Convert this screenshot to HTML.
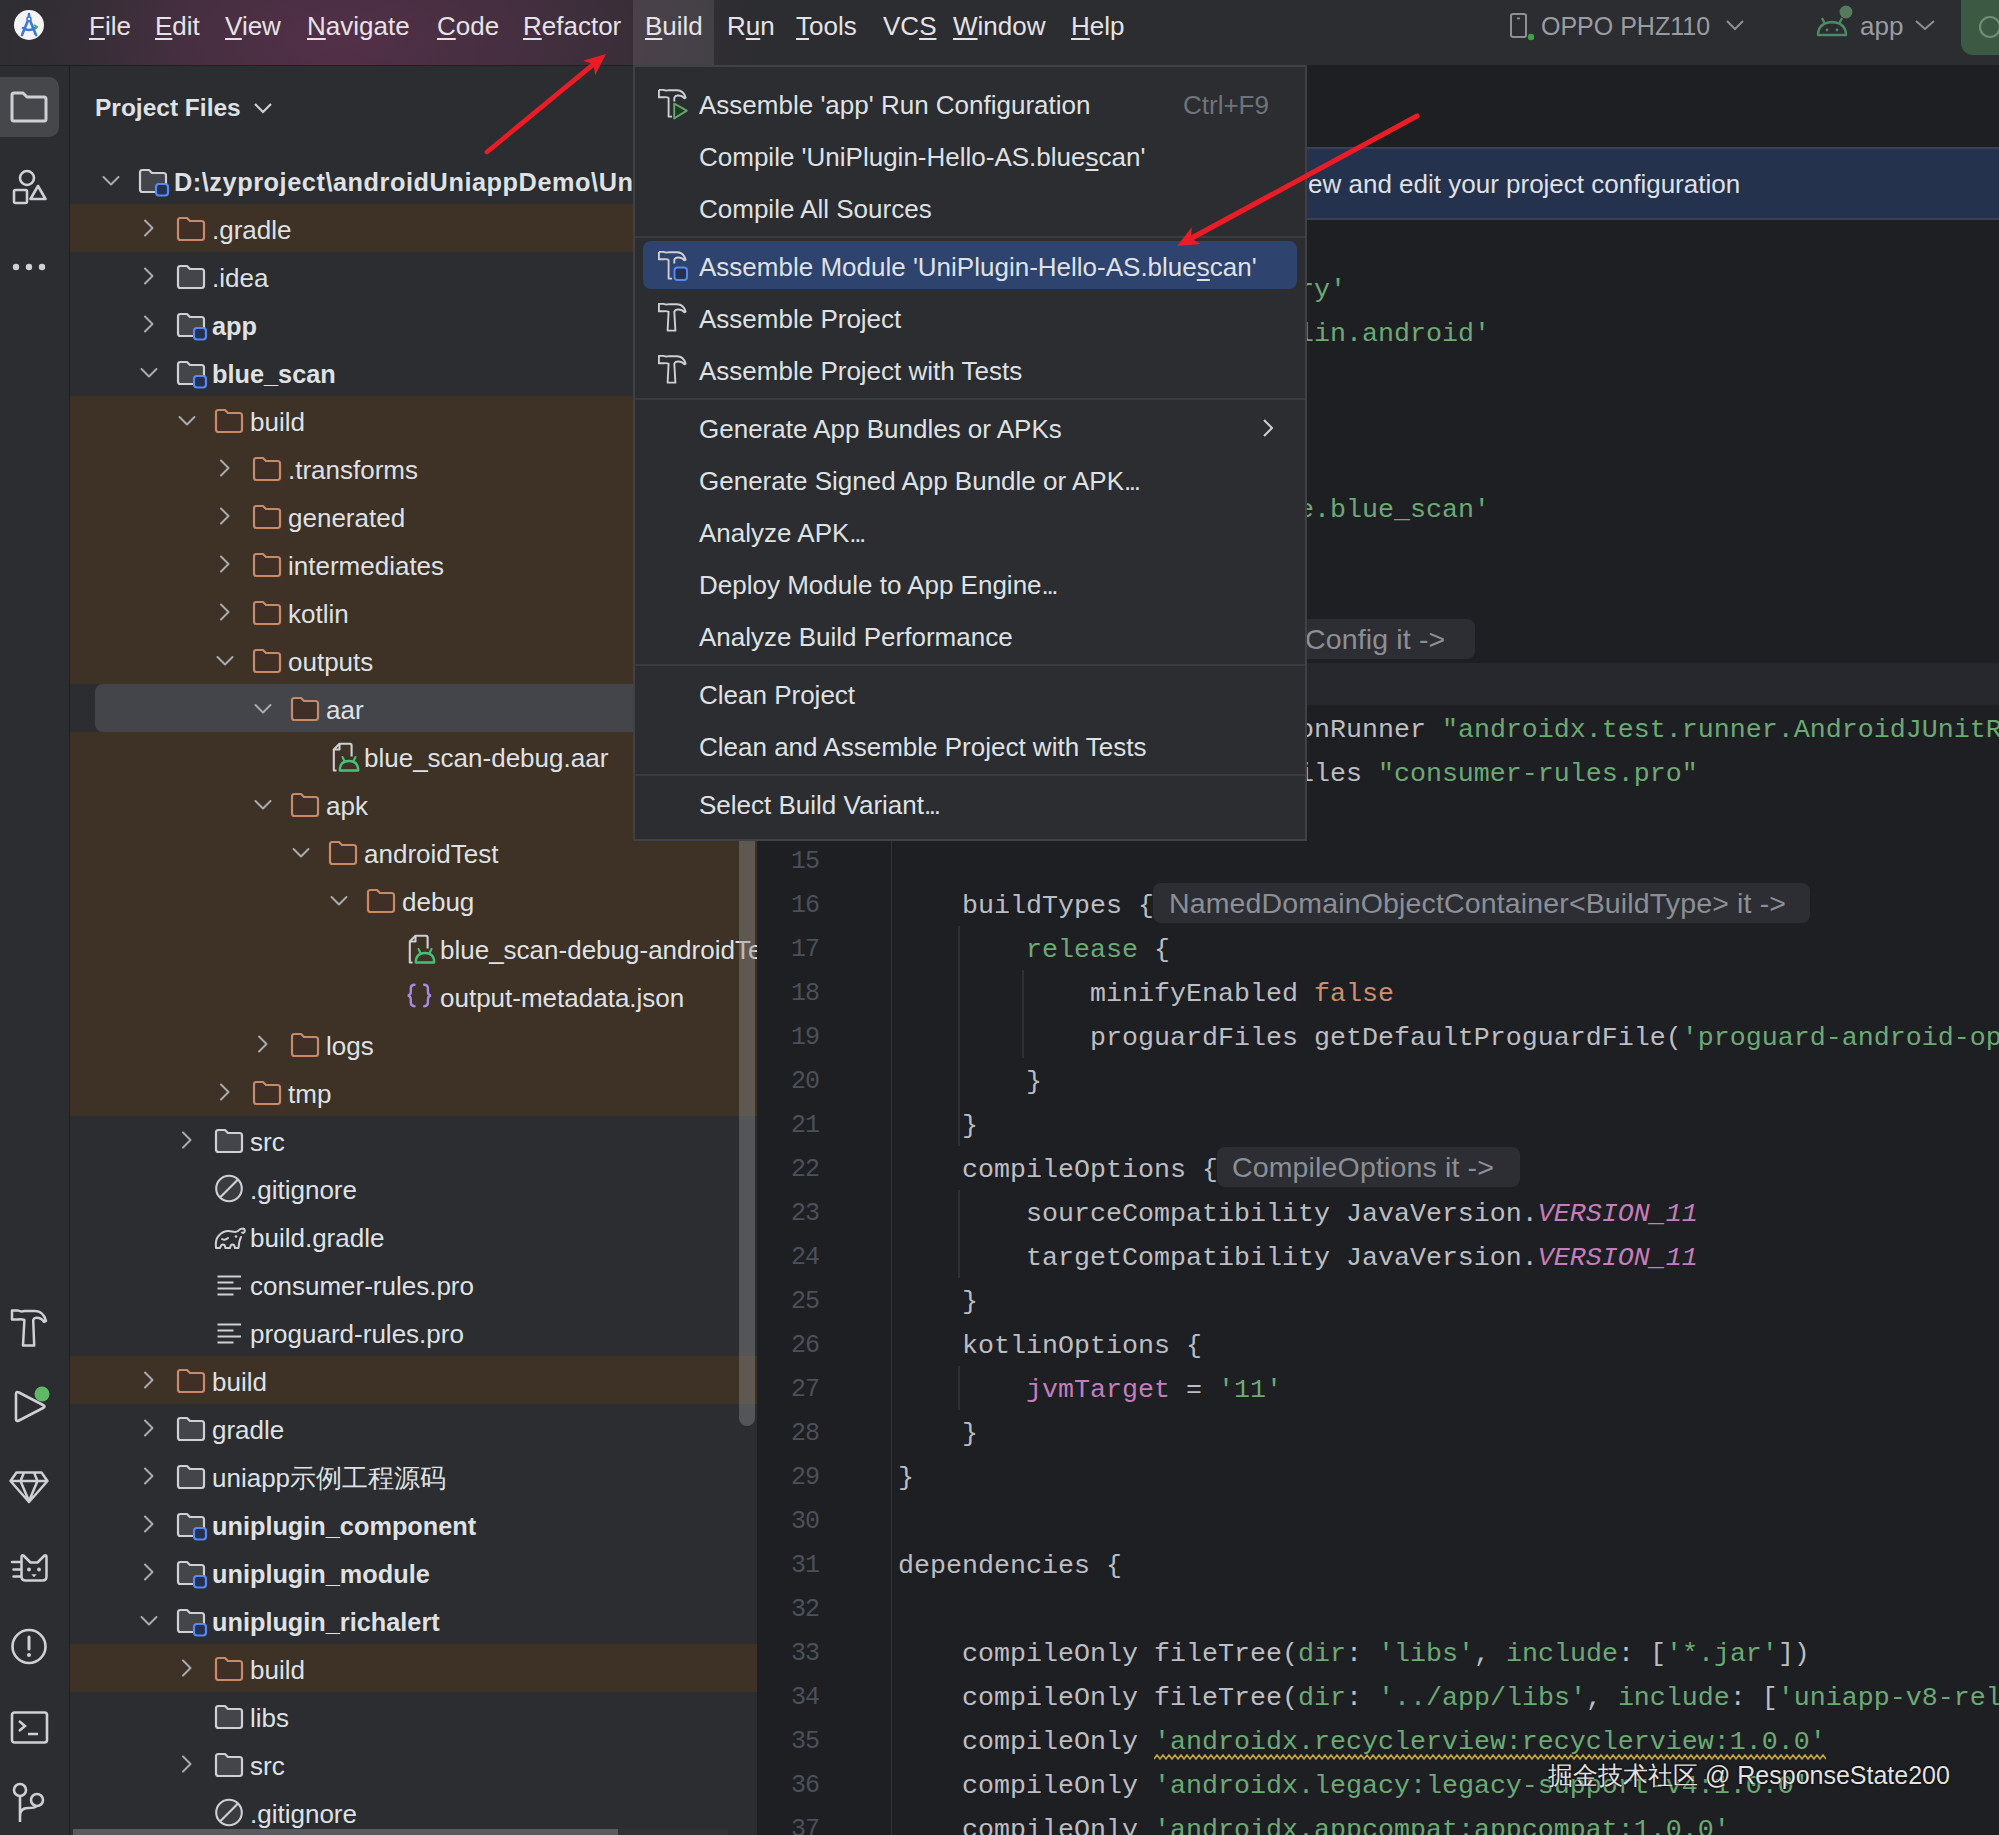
<!DOCTYPE html><html><head><meta charset="utf-8"><style>
*{box-sizing:border-box}
html,body{margin:0;padding:0;width:1999px;height:1835px;overflow:hidden;background:#1e1f22;font-family:"Liberation Sans",sans-serif;}
.a{position:absolute}
.t{position:absolute;white-space:pre;font-size:26px;line-height:30px;color:#dfe1e5}
.b{font-weight:bold;font-size:25.3px}
.u{text-decoration:underline;text-underline-offset:3px;text-decoration-thickness:2px}
.c{position:absolute;white-space:pre;font-family:"Liberation Mono",monospace;font-size:26.667px;line-height:44px;color:#bcbec4}
.g{color:#6aab73}.o{color:#cf8e6d}.p{color:#c77dbb;font-style:italic}.n{color:#4b5059}
.inl{position:absolute;background:#2c2e33;border-radius:8px;color:#8c8f96;font-size:28.5px;letter-spacing:0.15px;line-height:40px;white-space:pre;font-family:"Liberation Sans",sans-serif}

</style></head><body>
<div class="a" style="left:0;top:0;width:1999px;height:66px;background:#2b2d30"></div>
<div class="a" style="left:0;top:0;width:1999px;height:66px;background:radial-gradient(ellipse 440px 200px at 340px 40px, rgba(112,50,90,0.58), rgba(112,50,90,0.32) 50%, rgba(112,50,90,0.07) 85%, rgba(112,50,90,0) 100%)"></div>
<div class="a" style="left:0;top:0;width:200px;height:66px;background:linear-gradient(to right, rgba(43,45,48,0.55) 0px, rgba(43,45,48,0.45) 70px, rgba(43,45,48,0) 190px)"></div>
<div class="a" style="left:0;top:65px;width:1999px;height:1px;background:#1e1f22"></div>
<div class="a" style="left:633px;top:0;width:81px;height:66px;background:rgba(255,255,255,0.095)"></div>
<svg class="a" style="left:13px;top:9px" width="32" height="32" viewBox="0 0 32 32"><circle cx="16" cy="16" r="15" fill="#f4f4f6"/><path d="M16 5 V9 M16 9 L9 26 M16 9 L23 26 M10 19 Q16 23 22 19" fill="none" stroke="#3c78d8" stroke-width="2.6" stroke-linecap="round"/><circle cx="16" cy="10" r="2" fill="#f4f4f6" stroke="#3c78d8" stroke-width="1.5"/><path d="M21 16 l3 2 l-2 2" fill="none" stroke="#4caf50" stroke-width="2"/></svg>
<div class="t" style="left:89px;top:11px;color:#e6e2e6"><span class="u">F</span>ile</div>
<div class="t" style="left:155px;top:11px;color:#e6e2e6"><span class="u">E</span>dit</div>
<div class="t" style="left:225px;top:11px;color:#e6e2e6"><span class="u">V</span>iew</div>
<div class="t" style="left:307px;top:11px;color:#e6e2e6"><span class="u">N</span>avigate</div>
<div class="t" style="left:437px;top:11px;color:#e6e2e6"><span class="u">C</span>ode</div>
<div class="t" style="left:523px;top:11px;color:#e6e2e6"><span class="u">R</span>efactor</div>
<div class="t" style="left:645px;top:11px;color:#e6e2e6"><span class="u">B</span>uild</div>
<div class="t" style="left:727px;top:11px;color:#e6e2e6">R<span class="u">u</span>n</div>
<div class="t" style="left:796px;top:11px;color:#e6e2e6"><span class="u">T</span>ools</div>
<div class="t" style="left:883px;top:11px;color:#e6e2e6">VC<span class="u">S</span></div>
<div class="t" style="left:953px;top:11px;color:#e6e2e6"><span class="u">W</span>indow</div>
<div class="t" style="left:1071px;top:11px;color:#e6e2e6"><span class="u">H</span>elp</div>
<svg class="a" style="left:1508px;top:12px" width="30" height="30" viewBox="0 0 30 30"><rect x="3" y="2" width="15" height="23" rx="2" fill="none" stroke="#8e9096" stroke-width="2"/><rect x="9" y="5.5" width="3" height="1.8" fill="#8e9096"/><circle cx="23" cy="25" r="3.2" fill="#3fa345"/></svg>
<div class="t" style="left:1541px;top:11px;color:#9a9ca2;font-size:25px">OPPO PHZ110</div>
<svg class="a" style="left:1725px;top:18px" width="20" height="14" viewBox="0 0 20 14"><path d="M2 3 L10 11 L18 3" fill="none" stroke="#8e9096" stroke-width="2"/></svg>
<svg class="a" style="left:1815px;top:4px" width="42" height="36" viewBox="0 0 42 36"><path d="M3 31 Q3 19 17 18 Q31 19 31 31 Z" fill="none" stroke="#4f8a66" stroke-width="2.4" stroke-linejoin="round"/><path d="M7 14 L10 20 M27 14 L24 20" stroke="#4f8a66" stroke-width="2.4"/><circle cx="12" cy="26" r="1.4" fill="#4f8a66"/><circle cx="22" cy="26" r="1.4" fill="#4f8a66"/><circle cx="31" cy="8" r="6.5" fill="#557a5c"/></svg>
<div class="t" style="left:1860px;top:11px;color:#9a9ca2">app</div>
<svg class="a" style="left:1914px;top:18px" width="22" height="14" viewBox="0 0 22 14"><path d="M2 3 L11 11 L20 3" fill="none" stroke="#8e9096" stroke-width="2"/></svg>
<div class="a" style="left:1961px;top:0;width:60px;height:55px;border-radius:0 0 0 12px;background:#3c5a43"></div>
<svg class="a" style="left:1975px;top:12px" width="30" height="30" viewBox="0 0 30 30"><circle cx="15" cy="15" r="10" fill="none" stroke="#6f8f74" stroke-width="2.2"/></svg>
<div class="a" style="left:0;top:66px;width:69px;height:1769px;background:#2b2d30"></div>
<div class="a" style="left:69px;top:66px;width:1px;height:1769px;background:#1e1f22"></div>
<div class="a" style="left:0;top:77px;width:59px;height:60px;border-radius:0 10px 10px 0;background:#45474b"></div>
<svg class="a" style="left:9px;top:90px" width="40" height="34" viewBox="0 0 40 34"><path d="M3 5 Q3 3 5 3 H14 L18 7 H35 Q37 7 37 9 V29 Q37 31 35 31 H5 Q3 31 3 29 Z" fill="none" stroke="#ced0d6" stroke-width="3" stroke-linejoin="round"/></svg>
<svg class="a" style="left:10px;top:166px" width="40" height="40" viewBox="0 0 40 40"><circle cx="17" cy="12" r="7" fill="none" stroke="#ced0d6" stroke-width="2.6"/><rect x="4" y="24" width="13" height="13" rx="1.5" fill="none" stroke="#ced0d6" stroke-width="2.6"/><path d="M28 20 L35.5 33 H20.5 Z" fill="none" stroke="#ced0d6" stroke-width="2.6" stroke-linejoin="round"/></svg>
<svg class="a" style="left:10px;top:260px" width="40" height="14" viewBox="0 0 40 14"><circle cx="6" cy="7" r="3.2" fill="#ced0d6"/><circle cx="19" cy="7" r="3.2" fill="#ced0d6"/><circle cx="32" cy="7" r="3.2" fill="#ced0d6"/></svg>
<svg class="a" style="left:0px;top:1291px" width="60" height="60" viewBox="0 0 60 60"><path d="M12 19.5 H18 Q21 21 24.5 20 H35 Q43.5 20 46 30 L44 31 Q41.5 26.5 36 26.8 Q33.8 27 33.2 29 L34.2 54.5 H23 L24.4 29 Q21.5 27.8 18 28.5 H12 Z" fill="none" stroke="#ced0d6" stroke-width="2.5" stroke-linejoin="round"/></svg>
<svg class="a" style="left:10px;top:1384px" width="44" height="42" viewBox="0 0 44 42"><path d="M6 10 Q6 7 9 8.5 L33 21 Q36 22.5 33 24 L9 36.5 Q6 38 6 35 Z" fill="none" stroke="#ced0d6" stroke-width="2.6" stroke-linejoin="round"/><circle cx="32" cy="10" r="7.5" fill="#5fb865"/></svg>
<svg class="a" style="left:0px;top:1450px" width="60" height="60" viewBox="0 0 60 60"><path d="M16.5 22.5 H41.5 L47.5 31 L29 52 L10.5 31 Z M10.5 31 H47.5 M24 22.5 L20.5 31 L29 51 L37.5 31 L34 22.5" fill="none" stroke="#ced0d6" stroke-width="2.5" stroke-linejoin="round"/></svg>
<svg class="a" style="left:0px;top:1540px" width="60" height="60" viewBox="0 0 60 60"><path d="M21.5 17 Q21.5 14.5 23.5 15.5 L30.5 22.5 H37.5 L44.5 15.5 Q46.5 14.5 46.5 17 V36.5 Q46.5 40.5 42.5 40.5 H25.5 Q21.5 40.5 21.5 36.5 Z" fill="none" stroke="#ced0d6" stroke-width="2.5" stroke-linejoin="round"/><path d="M12 22 H21 M13.5 29.5 H21 M13.5 36.5 H21" stroke="#ced0d6" stroke-width="2.5" stroke-linecap="round"/><circle cx="29" cy="29.5" r="1.9" fill="#ced0d6"/><circle cx="39" cy="29.5" r="1.9" fill="#ced0d6"/><path d="M31.3 34.3 H36.7 L34 37.3 Z" fill="#ced0d6"/></svg>
<svg class="a" style="left:9px;top:1627px" width="40" height="40" viewBox="0 0 40 40"><circle cx="20" cy="19.5" r="16.5" fill="none" stroke="#ced0d6" stroke-width="2.6"/><path d="M20 10 V22" stroke="#ced0d6" stroke-width="3" stroke-linecap="round"/><circle cx="20" cy="28" r="2" fill="#ced0d6"/></svg>
<svg class="a" style="left:9px;top:1709px" width="42" height="38" viewBox="0 0 42 38"><rect x="3" y="3.5" width="35" height="30" rx="2.5" fill="none" stroke="#ced0d6" stroke-width="2.6"/><path d="M10 12 L16 17 L10 22" fill="none" stroke="#ced0d6" stroke-width="2.5"/><path d="M19 25 H29" stroke="#ced0d6" stroke-width="2.5"/></svg>
<svg class="a" style="left:0px;top:1770px" width="60" height="60" viewBox="0 0 60 60"><circle cx="20" cy="20" r="6" fill="none" stroke="#ced0d6" stroke-width="2.6"/><circle cx="37" cy="30" r="6" fill="none" stroke="#ced0d6" stroke-width="2.6"/><path d="M20 26 V52 M20 46 Q20 38 28 38 Q36 38 36.5 36" fill="none" stroke="#ced0d6" stroke-width="2.6"/></svg>
<div class="a" style="left:70px;top:66px;width:687px;height:1769px;background:#2b2d30"></div>
<div class="t b" style="left:95px;top:93px;font-size:24.5px">Project Files</div>
<svg class="a" style="left:253px;top:101px" width="20" height="14" viewBox="0 0 20 14"><path d="M2 3 L10 11 L18 3" fill="none" stroke="#ced0d6" stroke-width="2.2"/></svg>
<div class="a" style="left:70px;top:66px;width:687px;height:1769px;overflow:hidden">
<svg style="position:absolute;left:31px;top:109px" width="20" height="14" viewBox="0 0 20 14"><path d="M2.5 2 L10 9.5 L17.5 2" fill="none" stroke="#a8abb0" stroke-width="2" stroke-linecap="round" stroke-linejoin="round"/></svg>
<svg style="position:absolute;left:67px;top:101px" width="34" height="30" viewBox="-2 -2 34 30"><path d="M1 3.5 Q1 1 3.5 1 H10 L13 4 H24.5 Q27 4 27 6.5 V20.5 Q27 23 24.5 23 H3.5 Q1 23 1 20.5 Z" fill="#43454a" stroke="#ced0d6" stroke-width="2.2" stroke-linejoin="round"/><rect x="17" y="15" width="12" height="11.5" rx="3" fill="#25324d" stroke="#548af7" stroke-width="2.2"/></svg>
<div class="t b" style="left:104px;top:101px;letter-spacing:0.55px">D:\zyproject\androidUniappDemo\UniPlugin-Hello-AS</div>
<div class="a" style="left:0;top:138px;width:687px;height:48px;background:#3d3225"></div>
<svg style="position:absolute;left:72px;top:153px" width="14" height="20" viewBox="0 0 14 20"><path d="M3 1.5 L10.5 9 L3 16.5" fill="none" stroke="#a8abb0" stroke-width="2" stroke-linecap="round" stroke-linejoin="round"/></svg>
<svg style="position:absolute;left:105px;top:149px" width="34" height="30" viewBox="-2 -2 34 30"><path d="M1 3.5 Q1 1 3.5 1 H10 L13 4 H24.5 Q27 4 27 6.5 V20.5 Q27 23 24.5 23 H3.5 Q1 23 1 20.5 Z" fill="#3f2f26" stroke="#c98a67" stroke-width="2.2" stroke-linejoin="round"/></svg>
<div class="t" style="left:142px;top:149px">.gradle</div>
<svg style="position:absolute;left:72px;top:201px" width="14" height="20" viewBox="0 0 14 20"><path d="M3 1.5 L10.5 9 L3 16.5" fill="none" stroke="#a8abb0" stroke-width="2" stroke-linecap="round" stroke-linejoin="round"/></svg>
<svg style="position:absolute;left:105px;top:197px" width="34" height="30" viewBox="-2 -2 34 30"><path d="M1 3.5 Q1 1 3.5 1 H10 L13 4 H24.5 Q27 4 27 6.5 V20.5 Q27 23 24.5 23 H3.5 Q1 23 1 20.5 Z" fill="#43454a" stroke="#ced0d6" stroke-width="2.2" stroke-linejoin="round"/></svg>
<div class="t" style="left:142px;top:197px">.idea</div>
<svg style="position:absolute;left:72px;top:249px" width="14" height="20" viewBox="0 0 14 20"><path d="M3 1.5 L10.5 9 L3 16.5" fill="none" stroke="#a8abb0" stroke-width="2" stroke-linecap="round" stroke-linejoin="round"/></svg>
<svg style="position:absolute;left:105px;top:245px" width="34" height="30" viewBox="-2 -2 34 30"><path d="M1 3.5 Q1 1 3.5 1 H10 L13 4 H24.5 Q27 4 27 6.5 V20.5 Q27 23 24.5 23 H3.5 Q1 23 1 20.5 Z" fill="#43454a" stroke="#ced0d6" stroke-width="2.2" stroke-linejoin="round"/><rect x="17" y="15" width="12" height="11.5" rx="3" fill="#25324d" stroke="#548af7" stroke-width="2.2"/></svg>
<div class="t b" style="left:142px;top:245px">app</div>
<svg style="position:absolute;left:69px;top:301px" width="20" height="14" viewBox="0 0 20 14"><path d="M2.5 2 L10 9.5 L17.5 2" fill="none" stroke="#a8abb0" stroke-width="2" stroke-linecap="round" stroke-linejoin="round"/></svg>
<svg style="position:absolute;left:105px;top:293px" width="34" height="30" viewBox="-2 -2 34 30"><path d="M1 3.5 Q1 1 3.5 1 H10 L13 4 H24.5 Q27 4 27 6.5 V20.5 Q27 23 24.5 23 H3.5 Q1 23 1 20.5 Z" fill="#43454a" stroke="#ced0d6" stroke-width="2.2" stroke-linejoin="round"/><rect x="17" y="15" width="12" height="11.5" rx="3" fill="#25324d" stroke="#548af7" stroke-width="2.2"/></svg>
<div class="t b" style="left:142px;top:293px">blue_scan</div>
<div class="a" style="left:0;top:330px;width:687px;height:48px;background:#3d3225"></div>
<svg style="position:absolute;left:107px;top:349px" width="20" height="14" viewBox="0 0 20 14"><path d="M2.5 2 L10 9.5 L17.5 2" fill="none" stroke="#a8abb0" stroke-width="2" stroke-linecap="round" stroke-linejoin="round"/></svg>
<svg style="position:absolute;left:143px;top:341px" width="34" height="30" viewBox="-2 -2 34 30"><path d="M1 3.5 Q1 1 3.5 1 H10 L13 4 H24.5 Q27 4 27 6.5 V20.5 Q27 23 24.5 23 H3.5 Q1 23 1 20.5 Z" fill="#3f2f26" stroke="#c98a67" stroke-width="2.2" stroke-linejoin="round"/></svg>
<div class="t" style="left:180px;top:341px">build</div>
<div class="a" style="left:0;top:378px;width:687px;height:48px;background:#3d3225"></div>
<svg style="position:absolute;left:148px;top:393px" width="14" height="20" viewBox="0 0 14 20"><path d="M3 1.5 L10.5 9 L3 16.5" fill="none" stroke="#a8abb0" stroke-width="2" stroke-linecap="round" stroke-linejoin="round"/></svg>
<svg style="position:absolute;left:181px;top:389px" width="34" height="30" viewBox="-2 -2 34 30"><path d="M1 3.5 Q1 1 3.5 1 H10 L13 4 H24.5 Q27 4 27 6.5 V20.5 Q27 23 24.5 23 H3.5 Q1 23 1 20.5 Z" fill="#3f2f26" stroke="#c98a67" stroke-width="2.2" stroke-linejoin="round"/></svg>
<div class="t" style="left:218px;top:389px">.transforms</div>
<div class="a" style="left:0;top:426px;width:687px;height:48px;background:#3d3225"></div>
<svg style="position:absolute;left:148px;top:441px" width="14" height="20" viewBox="0 0 14 20"><path d="M3 1.5 L10.5 9 L3 16.5" fill="none" stroke="#a8abb0" stroke-width="2" stroke-linecap="round" stroke-linejoin="round"/></svg>
<svg style="position:absolute;left:181px;top:437px" width="34" height="30" viewBox="-2 -2 34 30"><path d="M1 3.5 Q1 1 3.5 1 H10 L13 4 H24.5 Q27 4 27 6.5 V20.5 Q27 23 24.5 23 H3.5 Q1 23 1 20.5 Z" fill="#3f2f26" stroke="#c98a67" stroke-width="2.2" stroke-linejoin="round"/></svg>
<div class="t" style="left:218px;top:437px">generated</div>
<div class="a" style="left:0;top:474px;width:687px;height:48px;background:#3d3225"></div>
<svg style="position:absolute;left:148px;top:489px" width="14" height="20" viewBox="0 0 14 20"><path d="M3 1.5 L10.5 9 L3 16.5" fill="none" stroke="#a8abb0" stroke-width="2" stroke-linecap="round" stroke-linejoin="round"/></svg>
<svg style="position:absolute;left:181px;top:485px" width="34" height="30" viewBox="-2 -2 34 30"><path d="M1 3.5 Q1 1 3.5 1 H10 L13 4 H24.5 Q27 4 27 6.5 V20.5 Q27 23 24.5 23 H3.5 Q1 23 1 20.5 Z" fill="#3f2f26" stroke="#c98a67" stroke-width="2.2" stroke-linejoin="round"/></svg>
<div class="t" style="left:218px;top:485px">intermediates</div>
<div class="a" style="left:0;top:522px;width:687px;height:48px;background:#3d3225"></div>
<svg style="position:absolute;left:148px;top:537px" width="14" height="20" viewBox="0 0 14 20"><path d="M3 1.5 L10.5 9 L3 16.5" fill="none" stroke="#a8abb0" stroke-width="2" stroke-linecap="round" stroke-linejoin="round"/></svg>
<svg style="position:absolute;left:181px;top:533px" width="34" height="30" viewBox="-2 -2 34 30"><path d="M1 3.5 Q1 1 3.5 1 H10 L13 4 H24.5 Q27 4 27 6.5 V20.5 Q27 23 24.5 23 H3.5 Q1 23 1 20.5 Z" fill="#3f2f26" stroke="#c98a67" stroke-width="2.2" stroke-linejoin="round"/></svg>
<div class="t" style="left:218px;top:533px">kotlin</div>
<div class="a" style="left:0;top:570px;width:687px;height:48px;background:#3d3225"></div>
<svg style="position:absolute;left:145px;top:589px" width="20" height="14" viewBox="0 0 20 14"><path d="M2.5 2 L10 9.5 L17.5 2" fill="none" stroke="#a8abb0" stroke-width="2" stroke-linecap="round" stroke-linejoin="round"/></svg>
<svg style="position:absolute;left:181px;top:581px" width="34" height="30" viewBox="-2 -2 34 30"><path d="M1 3.5 Q1 1 3.5 1 H10 L13 4 H24.5 Q27 4 27 6.5 V20.5 Q27 23 24.5 23 H3.5 Q1 23 1 20.5 Z" fill="#3f2f26" stroke="#c98a67" stroke-width="2.2" stroke-linejoin="round"/></svg>
<div class="t" style="left:218px;top:581px">outputs</div>
<div class="a" style="left:25px;top:618px;width:680px;height:48px;border-radius:8px;background:#43454a"></div>
<svg style="position:absolute;left:183px;top:637px" width="20" height="14" viewBox="0 0 20 14"><path d="M2.5 2 L10 9.5 L17.5 2" fill="none" stroke="#a8abb0" stroke-width="2" stroke-linecap="round" stroke-linejoin="round"/></svg>
<svg style="position:absolute;left:219px;top:629px" width="34" height="30" viewBox="-2 -2 34 30"><path d="M1 3.5 Q1 1 3.5 1 H10 L13 4 H24.5 Q27 4 27 6.5 V20.5 Q27 23 24.5 23 H3.5 Q1 23 1 20.5 Z" fill="#3f2f26" stroke="#c98a67" stroke-width="2.2" stroke-linejoin="round"/></svg>
<div class="t" style="left:256px;top:629px">aar</div>
<div class="a" style="left:0;top:666px;width:687px;height:48px;background:#3d3225"></div>
<svg class="a" style="left:259px;top:674px" width="32" height="34" viewBox="0 0 32 34"><path d="M7.5 30.5 H4.8 V9.5 L10.5 3.8 H21 Q22.6 3.8 22.6 5.4 V16.5" fill="none" stroke="#ced0d6" stroke-width="2.1" stroke-linejoin="round"/><path d="M10.5 3.8 V9.5 H4.8" fill="none" stroke="#ced0d6" stroke-width="2.1" stroke-linejoin="round"/><path d="M10.8 30.5 Q10.8 21 20 21 Q29.2 21 29.2 30.5 Z" fill="none" stroke="#45c27a" stroke-width="2.3" stroke-linejoin="round"/><path d="M13.5 17 L15.6 21.3 M26.5 17 L24.4 21.3" stroke="#45c27a" stroke-width="2.1" stroke-linecap="round"/></svg>
<div class="t" style="left:294px;top:677px">blue_scan-debug.aar</div>
<div class="a" style="left:0;top:714px;width:687px;height:48px;background:#3d3225"></div>
<svg style="position:absolute;left:183px;top:733px" width="20" height="14" viewBox="0 0 20 14"><path d="M2.5 2 L10 9.5 L17.5 2" fill="none" stroke="#a8abb0" stroke-width="2" stroke-linecap="round" stroke-linejoin="round"/></svg>
<svg style="position:absolute;left:219px;top:725px" width="34" height="30" viewBox="-2 -2 34 30"><path d="M1 3.5 Q1 1 3.5 1 H10 L13 4 H24.5 Q27 4 27 6.5 V20.5 Q27 23 24.5 23 H3.5 Q1 23 1 20.5 Z" fill="#3f2f26" stroke="#c98a67" stroke-width="2.2" stroke-linejoin="round"/></svg>
<div class="t" style="left:256px;top:725px">apk</div>
<div class="a" style="left:0;top:762px;width:687px;height:48px;background:#3d3225"></div>
<svg style="position:absolute;left:221px;top:781px" width="20" height="14" viewBox="0 0 20 14"><path d="M2.5 2 L10 9.5 L17.5 2" fill="none" stroke="#a8abb0" stroke-width="2" stroke-linecap="round" stroke-linejoin="round"/></svg>
<svg style="position:absolute;left:257px;top:773px" width="34" height="30" viewBox="-2 -2 34 30"><path d="M1 3.5 Q1 1 3.5 1 H10 L13 4 H24.5 Q27 4 27 6.5 V20.5 Q27 23 24.5 23 H3.5 Q1 23 1 20.5 Z" fill="#3f2f26" stroke="#c98a67" stroke-width="2.2" stroke-linejoin="round"/></svg>
<div class="t" style="left:294px;top:773px">androidTest</div>
<div class="a" style="left:0;top:810px;width:687px;height:48px;background:#3d3225"></div>
<svg style="position:absolute;left:259px;top:829px" width="20" height="14" viewBox="0 0 20 14"><path d="M2.5 2 L10 9.5 L17.5 2" fill="none" stroke="#a8abb0" stroke-width="2" stroke-linecap="round" stroke-linejoin="round"/></svg>
<svg style="position:absolute;left:295px;top:821px" width="34" height="30" viewBox="-2 -2 34 30"><path d="M1 3.5 Q1 1 3.5 1 H10 L13 4 H24.5 Q27 4 27 6.5 V20.5 Q27 23 24.5 23 H3.5 Q1 23 1 20.5 Z" fill="#3f2f26" stroke="#c98a67" stroke-width="2.2" stroke-linejoin="round"/></svg>
<div class="t" style="left:332px;top:821px">debug</div>
<div class="a" style="left:0;top:858px;width:687px;height:48px;background:#3d3225"></div>
<svg class="a" style="left:335px;top:866px" width="32" height="34" viewBox="0 0 32 34"><path d="M7.5 30.5 H4.8 V9.5 L10.5 3.8 H21 Q22.6 3.8 22.6 5.4 V16.5" fill="none" stroke="#ced0d6" stroke-width="2.1" stroke-linejoin="round"/><path d="M10.5 3.8 V9.5 H4.8" fill="none" stroke="#ced0d6" stroke-width="2.1" stroke-linejoin="round"/><path d="M10.8 30.5 Q10.8 21 20 21 Q29.2 21 29.2 30.5 Z" fill="none" stroke="#45c27a" stroke-width="2.3" stroke-linejoin="round"/><path d="M13.5 17 L15.6 21.3 M26.5 17 L24.4 21.3" stroke="#45c27a" stroke-width="2.1" stroke-linecap="round"/></svg>
<div class="t" style="left:370px;top:869px">blue_scan-debug-androidTest.apk</div>
<div class="a" style="left:0;top:906px;width:687px;height:48px;background:#3d3225"></div>
<svg class="a" style="left:335px;top:915px" width="30" height="30" viewBox="0 0 30 30"><path d="M9.5 3.8 Q5.8 3.8 5.8 7.5 V11 Q5.8 14 2.8 14.6 Q5.8 15.2 5.8 18.2 V21.6 Q5.8 25.2 9.5 25.2 M19.2 3.8 Q22.9 3.8 22.9 7.5 V11 Q22.9 14 25.9 14.6 Q22.9 15.2 22.9 18.2 V21.6 Q22.9 25.2 19.2 25.2" fill="none" stroke="#a98ae0" stroke-width="2.4" stroke-linecap="round"/></svg>
<div class="t" style="left:370px;top:917px">output-metadata.json</div>
<div class="a" style="left:0;top:954px;width:687px;height:48px;background:#3d3225"></div>
<svg style="position:absolute;left:186px;top:969px" width="14" height="20" viewBox="0 0 14 20"><path d="M3 1.5 L10.5 9 L3 16.5" fill="none" stroke="#a8abb0" stroke-width="2" stroke-linecap="round" stroke-linejoin="round"/></svg>
<svg style="position:absolute;left:219px;top:965px" width="34" height="30" viewBox="-2 -2 34 30"><path d="M1 3.5 Q1 1 3.5 1 H10 L13 4 H24.5 Q27 4 27 6.5 V20.5 Q27 23 24.5 23 H3.5 Q1 23 1 20.5 Z" fill="#3f2f26" stroke="#c98a67" stroke-width="2.2" stroke-linejoin="round"/></svg>
<div class="t" style="left:256px;top:965px">logs</div>
<div class="a" style="left:0;top:1002px;width:687px;height:48px;background:#3d3225"></div>
<svg style="position:absolute;left:148px;top:1017px" width="14" height="20" viewBox="0 0 14 20"><path d="M3 1.5 L10.5 9 L3 16.5" fill="none" stroke="#a8abb0" stroke-width="2" stroke-linecap="round" stroke-linejoin="round"/></svg>
<svg style="position:absolute;left:181px;top:1013px" width="34" height="30" viewBox="-2 -2 34 30"><path d="M1 3.5 Q1 1 3.5 1 H10 L13 4 H24.5 Q27 4 27 6.5 V20.5 Q27 23 24.5 23 H3.5 Q1 23 1 20.5 Z" fill="#3f2f26" stroke="#c98a67" stroke-width="2.2" stroke-linejoin="round"/></svg>
<div class="t" style="left:218px;top:1013px">tmp</div>
<svg style="position:absolute;left:110px;top:1065px" width="14" height="20" viewBox="0 0 14 20"><path d="M3 1.5 L10.5 9 L3 16.5" fill="none" stroke="#a8abb0" stroke-width="2" stroke-linecap="round" stroke-linejoin="round"/></svg>
<svg style="position:absolute;left:143px;top:1061px" width="34" height="30" viewBox="-2 -2 34 30"><path d="M1 3.5 Q1 1 3.5 1 H10 L13 4 H24.5 Q27 4 27 6.5 V20.5 Q27 23 24.5 23 H3.5 Q1 23 1 20.5 Z" fill="#43454a" stroke="#ced0d6" stroke-width="2.2" stroke-linejoin="round"/></svg>
<div class="t" style="left:180px;top:1061px">src</div>
<svg class="a" style="left:145px;top:1107px" width="30" height="30" viewBox="0 0 30 30"><circle cx="14" cy="15.5" r="12.8" fill="#3a3c40" stroke="#ced0d6" stroke-width="2.1"/><path d="M5 24.5 L23 6.5" stroke="#ced0d6" stroke-width="2.1"/></svg>
<div class="t" style="left:180px;top:1109px">.gitignore</div>
<svg class="a" style="left:143px;top:1155px" width="34" height="30" viewBox="0 0 34 30"><path d="M3 27 Q2 19 5.5 15 Q11 8.5 19 10.5 Q23 11.5 25 10 Q27 7.5 30 7.5 Q32.5 8 31.5 11 Q30.5 12.5 29 11.5 M3 27 H7 Q8 23.5 10 23.5 Q12 23.5 12.5 27 H17 Q17.5 23.5 19.5 23.5 Q21.5 23.5 22 27 H25.5 Q26 20 28 16 M9 18 Q12 20 15 17" fill="none" stroke="#ced0d6" stroke-width="2" stroke-linejoin="round" stroke-linecap="round"/><circle cx="23" cy="15.5" r="1.3" fill="#ced0d6"/></svg>
<div class="t" style="left:180px;top:1157px">build.gradle</div>
<svg class="a" style="left:145px;top:1203px" width="30" height="30" viewBox="0 0 30 30"><path d="M2.5 7.5 H26 M2.5 13.5 H18.5 M2.5 19.5 H26 M2.5 25.5 H18.5" stroke="#ced0d6" stroke-width="2.1"/></svg>
<div class="t" style="left:180px;top:1205px">consumer-rules.pro</div>
<svg class="a" style="left:145px;top:1251px" width="30" height="30" viewBox="0 0 30 30"><path d="M2.5 7.5 H26 M2.5 13.5 H18.5 M2.5 19.5 H26 M2.5 25.5 H18.5" stroke="#ced0d6" stroke-width="2.1"/></svg>
<div class="t" style="left:180px;top:1253px">proguard-rules.pro</div>
<div class="a" style="left:0;top:1290px;width:687px;height:48px;background:#3d3225"></div>
<svg style="position:absolute;left:72px;top:1305px" width="14" height="20" viewBox="0 0 14 20"><path d="M3 1.5 L10.5 9 L3 16.5" fill="none" stroke="#a8abb0" stroke-width="2" stroke-linecap="round" stroke-linejoin="round"/></svg>
<svg style="position:absolute;left:105px;top:1301px" width="34" height="30" viewBox="-2 -2 34 30"><path d="M1 3.5 Q1 1 3.5 1 H10 L13 4 H24.5 Q27 4 27 6.5 V20.5 Q27 23 24.5 23 H3.5 Q1 23 1 20.5 Z" fill="#3f2f26" stroke="#c98a67" stroke-width="2.2" stroke-linejoin="round"/></svg>
<div class="t" style="left:142px;top:1301px">build</div>
<svg style="position:absolute;left:72px;top:1353px" width="14" height="20" viewBox="0 0 14 20"><path d="M3 1.5 L10.5 9 L3 16.5" fill="none" stroke="#a8abb0" stroke-width="2" stroke-linecap="round" stroke-linejoin="round"/></svg>
<svg style="position:absolute;left:105px;top:1349px" width="34" height="30" viewBox="-2 -2 34 30"><path d="M1 3.5 Q1 1 3.5 1 H10 L13 4 H24.5 Q27 4 27 6.5 V20.5 Q27 23 24.5 23 H3.5 Q1 23 1 20.5 Z" fill="#43454a" stroke="#ced0d6" stroke-width="2.2" stroke-linejoin="round"/></svg>
<div class="t" style="left:142px;top:1349px">gradle</div>
<svg style="position:absolute;left:72px;top:1401px" width="14" height="20" viewBox="0 0 14 20"><path d="M3 1.5 L10.5 9 L3 16.5" fill="none" stroke="#a8abb0" stroke-width="2" stroke-linecap="round" stroke-linejoin="round"/></svg>
<svg style="position:absolute;left:105px;top:1397px" width="34" height="30" viewBox="-2 -2 34 30"><path d="M1 3.5 Q1 1 3.5 1 H10 L13 4 H24.5 Q27 4 27 6.5 V20.5 Q27 23 24.5 23 H3.5 Q1 23 1 20.5 Z" fill="#43454a" stroke="#ced0d6" stroke-width="2.2" stroke-linejoin="round"/></svg>
<div class="t" style="left:142px;top:1397px">uniapp示例工程源码</div>
<svg style="position:absolute;left:72px;top:1449px" width="14" height="20" viewBox="0 0 14 20"><path d="M3 1.5 L10.5 9 L3 16.5" fill="none" stroke="#a8abb0" stroke-width="2" stroke-linecap="round" stroke-linejoin="round"/></svg>
<svg style="position:absolute;left:105px;top:1445px" width="34" height="30" viewBox="-2 -2 34 30"><path d="M1 3.5 Q1 1 3.5 1 H10 L13 4 H24.5 Q27 4 27 6.5 V20.5 Q27 23 24.5 23 H3.5 Q1 23 1 20.5 Z" fill="#43454a" stroke="#ced0d6" stroke-width="2.2" stroke-linejoin="round"/><rect x="17" y="15" width="12" height="11.5" rx="3" fill="#25324d" stroke="#548af7" stroke-width="2.2"/></svg>
<div class="t b" style="left:142px;top:1445px">uniplugin_component</div>
<svg style="position:absolute;left:72px;top:1497px" width="14" height="20" viewBox="0 0 14 20"><path d="M3 1.5 L10.5 9 L3 16.5" fill="none" stroke="#a8abb0" stroke-width="2" stroke-linecap="round" stroke-linejoin="round"/></svg>
<svg style="position:absolute;left:105px;top:1493px" width="34" height="30" viewBox="-2 -2 34 30"><path d="M1 3.5 Q1 1 3.5 1 H10 L13 4 H24.5 Q27 4 27 6.5 V20.5 Q27 23 24.5 23 H3.5 Q1 23 1 20.5 Z" fill="#43454a" stroke="#ced0d6" stroke-width="2.2" stroke-linejoin="round"/><rect x="17" y="15" width="12" height="11.5" rx="3" fill="#25324d" stroke="#548af7" stroke-width="2.2"/></svg>
<div class="t b" style="left:142px;top:1493px">uniplugin_module</div>
<svg style="position:absolute;left:69px;top:1549px" width="20" height="14" viewBox="0 0 20 14"><path d="M2.5 2 L10 9.5 L17.5 2" fill="none" stroke="#a8abb0" stroke-width="2" stroke-linecap="round" stroke-linejoin="round"/></svg>
<svg style="position:absolute;left:105px;top:1541px" width="34" height="30" viewBox="-2 -2 34 30"><path d="M1 3.5 Q1 1 3.5 1 H10 L13 4 H24.5 Q27 4 27 6.5 V20.5 Q27 23 24.5 23 H3.5 Q1 23 1 20.5 Z" fill="#43454a" stroke="#ced0d6" stroke-width="2.2" stroke-linejoin="round"/><rect x="17" y="15" width="12" height="11.5" rx="3" fill="#25324d" stroke="#548af7" stroke-width="2.2"/></svg>
<div class="t b" style="left:142px;top:1541px">uniplugin_richalert</div>
<div class="a" style="left:0;top:1578px;width:687px;height:48px;background:#3d3225"></div>
<svg style="position:absolute;left:110px;top:1593px" width="14" height="20" viewBox="0 0 14 20"><path d="M3 1.5 L10.5 9 L3 16.5" fill="none" stroke="#a8abb0" stroke-width="2" stroke-linecap="round" stroke-linejoin="round"/></svg>
<svg style="position:absolute;left:143px;top:1589px" width="34" height="30" viewBox="-2 -2 34 30"><path d="M1 3.5 Q1 1 3.5 1 H10 L13 4 H24.5 Q27 4 27 6.5 V20.5 Q27 23 24.5 23 H3.5 Q1 23 1 20.5 Z" fill="#3f2f26" stroke="#c98a67" stroke-width="2.2" stroke-linejoin="round"/></svg>
<div class="t" style="left:180px;top:1589px">build</div>
<svg style="position:absolute;left:143px;top:1637px" width="34" height="30" viewBox="-2 -2 34 30"><path d="M1 3.5 Q1 1 3.5 1 H10 L13 4 H24.5 Q27 4 27 6.5 V20.5 Q27 23 24.5 23 H3.5 Q1 23 1 20.5 Z" fill="#43454a" stroke="#ced0d6" stroke-width="2.2" stroke-linejoin="round"/></svg>
<div class="t" style="left:180px;top:1637px">libs</div>
<svg style="position:absolute;left:110px;top:1689px" width="14" height="20" viewBox="0 0 14 20"><path d="M3 1.5 L10.5 9 L3 16.5" fill="none" stroke="#a8abb0" stroke-width="2" stroke-linecap="round" stroke-linejoin="round"/></svg>
<svg style="position:absolute;left:143px;top:1685px" width="34" height="30" viewBox="-2 -2 34 30"><path d="M1 3.5 Q1 1 3.5 1 H10 L13 4 H24.5 Q27 4 27 6.5 V20.5 Q27 23 24.5 23 H3.5 Q1 23 1 20.5 Z" fill="#43454a" stroke="#ced0d6" stroke-width="2.2" stroke-linejoin="round"/></svg>
<div class="t" style="left:180px;top:1685px">src</div>
<svg class="a" style="left:145px;top:1731px" width="30" height="30" viewBox="0 0 30 30"><circle cx="14" cy="15.5" r="12.8" fill="#3a3c40" stroke="#ced0d6" stroke-width="2.1"/><path d="M5 24.5 L23 6.5" stroke="#ced0d6" stroke-width="2.1"/></svg>
<div class="t" style="left:180px;top:1733px">.gitignore</div>
</div>
<div class="a" style="left:739px;top:800px;width:16px;height:626px;border-radius:8px;background:rgba(140,140,140,0.42)"></div>
<div class="a" style="left:73px;top:1829px;width:655px;height:6px;background:#303236"></div>
<div class="a" style="left:73px;top:1829px;width:545px;height:6px;background:#595b5f"></div>
<div class="a" style="left:757px;top:66px;width:1242px;height:1769px;background:#1e1f22"></div>
<div class="a" style="left:891px;top:66px;width:1px;height:1769px;background:#313438"></div>
<div class="a" style="left:757px;top:663px;width:1242px;height:42px;background:#26282e"></div>
<div class="a" style="left:757px;top:147px;width:1242px;height:73px;background:#25324d;border-top:2px solid #384257;border-bottom:2px solid #384257"></div>
<div class="t" style="left:1308px;top:168.5px;">ew and edit your project configuration</div>
<div class="c n" style="left:757px;top:224px;width:62px;text-align:right;font-size:25px;letter-spacing:-1px">1</div>
<div class="c" style="left:898px;top:224px">plugins {</div>
<div class="c n" style="left:757px;top:268px;width:62px;text-align:right;font-size:25px;letter-spacing:-1px">2</div>
<div class="c" style="left:898px;top:268px">    id <span class="g">&#x27;com.android.library&#x27;</span></div>
<div class="c n" style="left:757px;top:312px;width:62px;text-align:right;font-size:25px;letter-spacing:-1px">3</div>
<div class="c" style="left:898px;top:312px">    id <span class="g">&#x27;org.jetbrains.kotlin.android&#x27;</span></div>
<div class="c n" style="left:757px;top:356px;width:62px;text-align:right;font-size:25px;letter-spacing:-1px">4</div>
<div class="c" style="left:898px;top:356px">}</div>
<div class="c n" style="left:757px;top:400px;width:62px;text-align:right;font-size:25px;letter-spacing:-1px">5</div>
<div class="c" style="left:898px;top:400px"></div>
<div class="c n" style="left:757px;top:444px;width:62px;text-align:right;font-size:25px;letter-spacing:-1px">6</div>
<div class="c" style="left:898px;top:444px">android {</div>
<div class="c n" style="left:757px;top:488px;width:62px;text-align:right;font-size:25px;letter-spacing:-1px">7</div>
<div class="c" style="left:898px;top:488px">    namespace <span class="g">&#x27;com.example.blue_scan&#x27;</span></div>
<div class="c n" style="left:757px;top:532px;width:62px;text-align:right;font-size:25px;letter-spacing:-1px">8</div>
<div class="c" style="left:898px;top:532px">    compileSdk 33</div>
<div class="c n" style="left:757px;top:576px;width:62px;text-align:right;font-size:25px;letter-spacing:-1px">9</div>
<div class="c" style="left:898px;top:576px"></div>
<div class="c n" style="left:757px;top:620px;width:62px;text-align:right;font-size:25px;letter-spacing:-1px">10</div>
<div class="c" style="left:898px;top:620px">    defaultConfig { </div>
<div class="c n" style="left:757px;top:664px;width:62px;text-align:right;font-size:25px;letter-spacing:-1px">11</div>
<div class="c" style="left:898px;top:664px">        minSdk 24</div>
<div class="c n" style="left:757px;top:708px;width:62px;text-align:right;font-size:25px;letter-spacing:-1px">12</div>
<div class="c" style="left:898px;top:708px">        testInstrumentationRunner <span class="g">&quot;androidx.test.runner.AndroidJUnitRunner&quot;</span></div>
<div class="c n" style="left:757px;top:752px;width:62px;text-align:right;font-size:25px;letter-spacing:-1px">13</div>
<div class="c" style="left:898px;top:752px">        consumerProguardFiles <span class="g">&quot;consumer-rules.pro&quot;</span></div>
<div class="c n" style="left:757px;top:796px;width:62px;text-align:right;font-size:25px;letter-spacing:-1px">14</div>
<div class="c" style="left:898px;top:796px">    }</div>
<div class="c n" style="left:757px;top:840px;width:62px;text-align:right;font-size:25px;letter-spacing:-1px">15</div>
<div class="c" style="left:898px;top:840px"></div>
<div class="c n" style="left:757px;top:884px;width:62px;text-align:right;font-size:25px;letter-spacing:-1px">16</div>
<div class="c" style="left:898px;top:884px">    buildTypes {</div>
<div class="c n" style="left:757px;top:928px;width:62px;text-align:right;font-size:25px;letter-spacing:-1px">17</div>
<div class="c" style="left:898px;top:928px">        <span class="g">release</span> {</div>
<div class="c n" style="left:757px;top:972px;width:62px;text-align:right;font-size:25px;letter-spacing:-1px">18</div>
<div class="c" style="left:898px;top:972px">            minifyEnabled <span class="o">false</span></div>
<div class="c n" style="left:757px;top:1016px;width:62px;text-align:right;font-size:25px;letter-spacing:-1px">19</div>
<div class="c" style="left:898px;top:1016px">            proguardFiles getDefaultProguardFile(<span class="g">&#x27;proguard-android-optimize.txt&#x27;</span>, <span class="g">&#x27;proguard-rules.pro&#x27;</span></div>
<div class="c n" style="left:757px;top:1060px;width:62px;text-align:right;font-size:25px;letter-spacing:-1px">20</div>
<div class="c" style="left:898px;top:1060px">        }</div>
<div class="c n" style="left:757px;top:1104px;width:62px;text-align:right;font-size:25px;letter-spacing:-1px">21</div>
<div class="c" style="left:898px;top:1104px">    }</div>
<div class="c n" style="left:757px;top:1148px;width:62px;text-align:right;font-size:25px;letter-spacing:-1px">22</div>
<div class="c" style="left:898px;top:1148px">    compileOptions {</div>
<div class="c n" style="left:757px;top:1192px;width:62px;text-align:right;font-size:25px;letter-spacing:-1px">23</div>
<div class="c" style="left:898px;top:1192px">        sourceCompatibility JavaVersion.<span class="p">VERSION_11</span></div>
<div class="c n" style="left:757px;top:1236px;width:62px;text-align:right;font-size:25px;letter-spacing:-1px">24</div>
<div class="c" style="left:898px;top:1236px">        targetCompatibility JavaVersion.<span class="p">VERSION_11</span></div>
<div class="c n" style="left:757px;top:1280px;width:62px;text-align:right;font-size:25px;letter-spacing:-1px">25</div>
<div class="c" style="left:898px;top:1280px">    }</div>
<div class="c n" style="left:757px;top:1324px;width:62px;text-align:right;font-size:25px;letter-spacing:-1px">26</div>
<div class="c" style="left:898px;top:1324px">    kotlinOptions {</div>
<div class="c n" style="left:757px;top:1368px;width:62px;text-align:right;font-size:25px;letter-spacing:-1px">27</div>
<div class="c" style="left:898px;top:1368px">        <span style="color:#c77dbb">jvmTarget</span> = <span class="g">&#x27;11&#x27;</span></div>
<div class="c n" style="left:757px;top:1412px;width:62px;text-align:right;font-size:25px;letter-spacing:-1px">28</div>
<div class="c" style="left:898px;top:1412px">    }</div>
<div class="c n" style="left:757px;top:1456px;width:62px;text-align:right;font-size:25px;letter-spacing:-1px">29</div>
<div class="c" style="left:898px;top:1456px">}</div>
<div class="c n" style="left:757px;top:1500px;width:62px;text-align:right;font-size:25px;letter-spacing:-1px">30</div>
<div class="c" style="left:898px;top:1500px"></div>
<div class="c n" style="left:757px;top:1544px;width:62px;text-align:right;font-size:25px;letter-spacing:-1px">31</div>
<div class="c" style="left:898px;top:1544px">dependencies {</div>
<div class="c n" style="left:757px;top:1588px;width:62px;text-align:right;font-size:25px;letter-spacing:-1px">32</div>
<div class="c" style="left:898px;top:1588px"></div>
<div class="c n" style="left:757px;top:1632px;width:62px;text-align:right;font-size:25px;letter-spacing:-1px">33</div>
<div class="c" style="left:898px;top:1632px">    compileOnly fileTree(<span class="g">dir</span>: <span class="g">&#x27;libs&#x27;</span>, <span class="g">include</span>: [<span class="g">&#x27;*.jar&#x27;</span>])</div>
<div class="c n" style="left:757px;top:1676px;width:62px;text-align:right;font-size:25px;letter-spacing:-1px">34</div>
<div class="c" style="left:898px;top:1676px">    compileOnly fileTree(<span class="g">dir</span>: <span class="g">&#x27;../app/libs&#x27;</span>, <span class="g">include</span>: [<span class="g">&#x27;uniapp-v8-release.aar&#x27;</span>])</div>
<div class="c n" style="left:757px;top:1720px;width:62px;text-align:right;font-size:25px;letter-spacing:-1px">35</div>
<div class="c" style="left:898px;top:1720px">    compileOnly <span class="g">&#x27;androidx.recyclerview:recyclerview:1.0.0&#x27;</span></div>
<div class="c n" style="left:757px;top:1764px;width:62px;text-align:right;font-size:25px;letter-spacing:-1px">36</div>
<div class="c" style="left:898px;top:1764px">    compileOnly <span class="g">&#x27;androidx.legacy:legacy-support-v4:1.0.0&#x27;</span></div>
<div class="c n" style="left:757px;top:1808px;width:62px;text-align:right;font-size:25px;letter-spacing:-1px">37</div>
<div class="c" style="left:898px;top:1808px">    compileOnly <span class="g">&#x27;androidx.appcompat:appcompat:1.0.0&#x27;</span></div>
<div class="inl" style="left:1153px;top:883px;width:657px;height:40px;padding-left:16px">NamedDomainObjectContainer&lt;BuildType&gt; it -&gt;</div>
<div class="inl" style="left:1217px;top:1147px;width:303px;height:40px;padding-left:15px">CompileOptions it -&gt;</div>
<div class="inl" style="left:1150px;top:619px;width:325px;height:40px;padding-left:155px">Config it -&gt;</div>
<div class="a" style="left:958px;top:926px;width:2px;height:220px;background:#2f3135"></div>
<div class="a" style="left:1022px;top:970px;width:2px;height:88px;background:#2f3135"></div>
<div class="a" style="left:958px;top:1190px;width:2px;height:88px;background:#2f3135"></div>
<div class="a" style="left:958px;top:1366px;width:2px;height:44px;background:#2f3135"></div>
<svg class="a" style="left:1154px;top:1752px" width="672" height="10" viewBox="0 0 672 10"><path d="M0 7 l3 -4 l3 4 l3 -4 l3 4 l3 -4 l3 4 l3 -4 l3 4 l3 -4 l3 4 l3 -4 l3 4 l3 -4 l3 4 l3 -4 l3 4 l3 -4 l3 4 l3 -4 l3 4 l3 -4 l3 4 l3 -4 l3 4 l3 -4 l3 4 l3 -4 l3 4 l3 -4 l3 4 l3 -4 l3 4 l3 -4 l3 4 l3 -4 l3 4 l3 -4 l3 4 l3 -4 l3 4 l3 -4 l3 4 l3 -4 l3 4 l3 -4 l3 4 l3 -4 l3 4 l3 -4 l3 4 l3 -4 l3 4 l3 -4 l3 4 l3 -4 l3 4 l3 -4 l3 4 l3 -4 l3 4 l3 -4 l3 4 l3 -4 l3 4 l3 -4 l3 4 l3 -4 l3 4 l3 -4 l3 4 l3 -4 l3 4 l3 -4 l3 4 l3 -4 l3 4 l3 -4 l3 4 l3 -4 l3 4 l3 -4 l3 4 l3 -4 l3 4 l3 -4 l3 4 l3 -4 l3 4 l3 -4 l3 4 l3 -4 l3 4 l3 -4 l3 4 l3 -4 l3 4 l3 -4 l3 4 l3 -4 l3 4 l3 -4 l3 4 l3 -4 l3 4 l3 -4 l3 4 l3 -4 l3 4 l3 -4 l3 4 l3 -4 l3 4 l3 -4 l3 4 l3 -4 l3 4 l3 -4 l3 4 l3 -4 l3 4 l3 -4 l3 4 l3 -4 l3 4 l3 -4 l3 4 l3 -4 l3 4 l3 -4 l3 4 l3 -4 l3 4 l3 -4 l3 4 l3 -4 l3 4 l3 -4 l3 4 l3 -4 l3 4 l3 -4 l3 4 l3 -4 l3 4 l3 -4 l3 4 l3 -4 l3 4 l3 -4 l3 4 l3 -4 l3 4 l3 -4 l3 4 l3 -4 l3 4 l3 -4 l3 4 l3 -4 l3 4 l3 -4 l3 4 l3 -4 l3 4 l3 -4 l3 4 l3 -4 l3 4 l3 -4 l3 4 l3 -4 l3 4 l3 -4 l3 4 l3 -4 l3 4 l3 -4 l3 4 l3 -4 l3 4 l3 -4 l3 4 l3 -4 l3 4 l3 -4 l3 4 l3 -4 l3 4 l3 -4 l3 4 l3 -4 l3 4 l3 -4 l3 4 l3 -4 l3 4 l3 -4 l3 4 l3 -4 l3 4 l3 -4 l3 4 l3 -4 l3 4 l3 -4 l3 4 l3 -4 l3 4 l3 -4 l3 4 l3 -4 l3 4 l3 -4 l3 4 l3 -4 l3 4 l3 -4 l3 4 l3 -4 l3 4 l3 -4 l3 4 l3 -4 l3 4" fill="none" stroke="#c9a93d" stroke-width="1.6"/></svg>
<div class="a" style="left:633px;top:65px;width:674px;height:776px;background:#2b2d30;border:2px solid #3f4146;border-top-width:2px"></div>
<svg style="position:absolute;left:658px;top:89px" width="31.0" height="31.0" viewBox="0 0 31 31"><path d="M0.9 0.9 H5.5 Q8 2 11 1.2 H19 Q25.5 1.2 27.6 8.6 L26.2 9.3 Q24 6.2 19.5 6.5 Q17.2 6.7 16.3 8.6 V12.5 M10.6 8.6 V27.6 H14 M10.6 8.6 Q8 7.9 5.5 8.3 H0.9 V0.9" fill="none" stroke="#ced0d6" stroke-width="1.9" stroke-linejoin="round"/><path d="M16.2 14.6 L28.8 21.6 L16.2 29.4 Z" fill="#1e3a22" stroke="#67a36b" stroke-width="1.9" stroke-linejoin="round"/></svg>
<div class="t" style="left:699px;top:90px">Assemble &#x27;app&#x27; Run Configuration</div>
<div class="t" style="left:1183px;top:90px;color:#6f737a">Ctrl+F9</div>
<div class="t" style="left:699px;top:142px">Compile &#x27;UniPlugin-Hello-AS.blue<span class="u">s</span>can&#x27;</div>
<div class="t" style="left:699px;top:194px">Compile All Sources</div>
<div class="a" style="left:635px;top:236px;width:670px;height:2px;background:#393b40"></div>
<div class="a" style="left:643px;top:241px;width:654px;height:48px;border-radius:8px;background:#2e436e"></div>
<svg style="position:absolute;left:658px;top:251px" width="31.0" height="31.0" viewBox="0 0 31 31"><path d="M0.9 0.9 H5.5 Q8 2 11 1.2 H19 Q25.5 1.2 27.6 8.6 L26.2 9.3 Q24 6.2 19.5 6.5 Q17.2 6.7 16.3 8.6 V12.5 M10.6 8.6 V27.6 H14 M10.6 8.6 Q8 7.9 5.5 8.3 H0.9 V0.9" fill="none" stroke="#ced0d6" stroke-width="1.9" stroke-linejoin="round"/><rect x="16.5" y="16.5" width="12.5" height="12.5" rx="3" fill="#25324d" stroke="#548af7" stroke-width="1.9"/></svg>
<div class="t" style="left:699px;top:252px">Assemble Module &#x27;UniPlugin-Hello-AS.blue<span class="u">s</span>can&#x27;</div>
<svg style="position:absolute;left:658px;top:303px" width="31.0" height="31.0" viewBox="0 0 31 31"><path d="M0.9 0.9 H5.5 Q8 2 11 1.2 H19 Q25.5 1.2 27.6 8.6 L26.2 9.3 Q24 6.2 19.5 6.5 Q17.2 6.7 16.3 8.6 L17.4 27.6 H9.6 L10.6 8.6 Q8 7.9 5.5 8.3 H0.9 Z" fill="none" stroke="#ced0d6" stroke-width="1.9" stroke-linejoin="round"/></svg>
<div class="t" style="left:699px;top:304px">Assemble Project</div>
<svg style="position:absolute;left:658px;top:355px" width="31.0" height="31.0" viewBox="0 0 31 31"><path d="M0.9 0.9 H5.5 Q8 2 11 1.2 H19 Q25.5 1.2 27.6 8.6 L26.2 9.3 Q24 6.2 19.5 6.5 Q17.2 6.7 16.3 8.6 L17.4 27.6 H9.6 L10.6 8.6 Q8 7.9 5.5 8.3 H0.9 Z" fill="none" stroke="#ced0d6" stroke-width="1.9" stroke-linejoin="round"/></svg>
<div class="t" style="left:699px;top:356px">Assemble Project with Tests</div>
<div class="a" style="left:635px;top:398px;width:670px;height:2px;background:#393b40"></div>
<div class="t" style="left:699px;top:414px">Generate App Bundles or APKs</div>
<svg class="a" style="left:1261px;top:418px" width="14" height="20" viewBox="0 0 14 20"><path d="M3 2 L11 10 L3 18" fill="none" stroke="#ced0d6" stroke-width="2"/></svg>
<div class="t" style="left:699px;top:466px">Generate Signed App Bundle or APK<span style="letter-spacing:-2.4px">...</span></div>
<div class="t" style="left:699px;top:518px">Analyze APK<span style="letter-spacing:-2.4px">...</span></div>
<div class="t" style="left:699px;top:570px">Deploy Module to App Engine<span style="letter-spacing:-2.4px">...</span></div>
<div class="t" style="left:699px;top:622px">Analyze Build Performance</div>
<div class="a" style="left:635px;top:664px;width:670px;height:2px;background:#393b40"></div>
<div class="t" style="left:699px;top:680px">Clean Project</div>
<div class="t" style="left:699px;top:732px">Clean and Assemble Project with Tests</div>
<div class="a" style="left:635px;top:774px;width:670px;height:2px;background:#393b40"></div>
<div class="t" style="left:699px;top:790px">Select Build Variant<span style="letter-spacing:-2.4px">...</span></div>
<svg class="a" style="left:0;top:0" width="1999" height="1835" viewBox="0 0 1999 1835"><line x1="487" y1="152" x2="593.6491162301272" y2="64.17131604577759" stroke="#ec1c26" stroke-width="4.8" stroke-linecap="round"/><path d="M606 54 L595.1 75.3 L593.6 64.2 L583.0 60.7 Z" fill="#ec1c26"/><line x1="1417" y1="116" x2="1191.0686714645883" y2="238.37946962334794" stroke="#ec1c26" stroke-width="5.2" stroke-linecap="round"/><path d="M1177 246 L1191.8 227.2 L1191.1 238.4 L1200.9 243.9 Z" fill="#ec1c26"/></svg>
<div class="t" style="left:1548px;top:1760px;color:#e2e2e2;font-size:25px;text-shadow:0 0 3px rgba(0,0,0,0.8),0 0 1px #000">掘金技术社区 @ ResponseState200</div>
</body></html>
